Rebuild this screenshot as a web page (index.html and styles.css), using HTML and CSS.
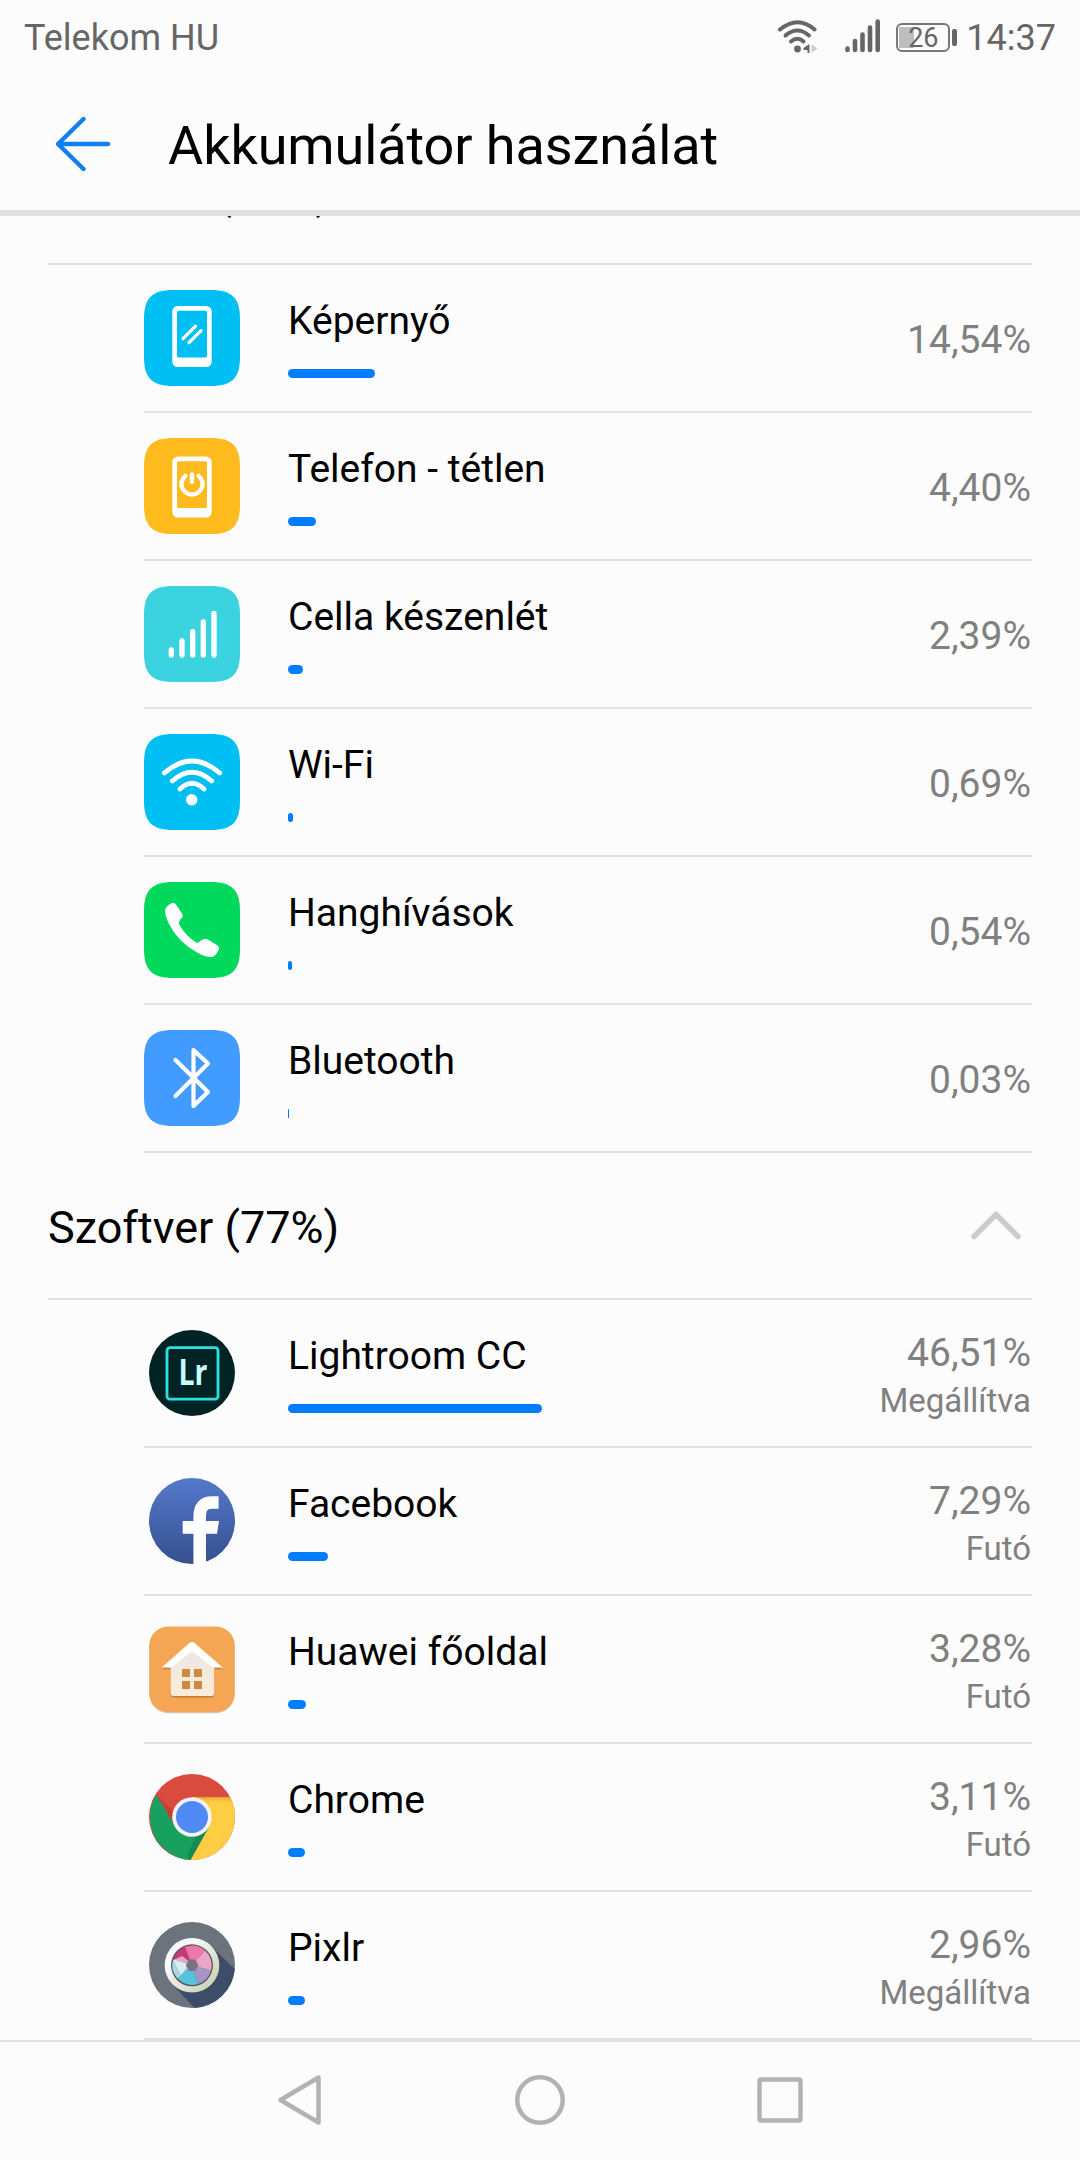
FILE: index.html
```html
<!DOCTYPE html>
<html lang="hu">
<head>
    <meta charset="UTF-8">
    <meta name="viewport" content="width=device-width, initial-scale=1.0">
    <title>Akkumulátor használat</title>
    <link rel="stylesheet" href="styles.css">
</head>
<body>
    <div class="status-bar">
        <span class="carrier">Telekom HU</span>
        <svg class="status-wifi" width="42" height="36" viewBox="0 0 42 36">
            <g fill="none" stroke="#666" stroke-width="4" stroke-linecap="round">
                <path d="M3 11.500Q21 -3 37.500 11.500"/>
                <path d="M8.500 17.500Q20.500 7.500 32 17.500"/>
                <path d="M14 23.500Q20.500 18 26.500 23.500"/>
            </g>
            <circle cx="20.500" cy="31" r="3.400" fill="#666"/>
            <path d="M32.500 26v9h-2v-3h-4v-2z" fill="#666"/>
            <path d="M34.500 26v9l6-4.500z" fill="#ccc"/>
        </svg>
        <svg class="status-signal" width="36" height="34" viewBox="0 0 36 34">
            <path d="M2.500 29.500v1.500M10 22v9M17.500 15.500v15.500M25 8.500v22.500M32.700 2.500v28.500" stroke="#666" stroke-width="4.600" stroke-linecap="round"/>
        </svg>
        <div class="battery"><span>26</span></div>
        <span class="clock">14:37</span>
    </div>

    <header class="action-bar">
        <svg class="back" width="56" height="56" viewBox="0 0 56 56">
            <path d="M28.500 3L3 28L28.500 53M3 28H53" fill="none" stroke="#0f7ff2" stroke-width="4.400" stroke-linecap="round" stroke-linejoin="round"/>
        </svg>
        <h1>Akkumulátor használat</h1>
    </header>

    <main class="scroll">
        <section class="hardware">
            <div class="section-head">
                <h2>Hardver (23%)</h2>
            </div>

            <div class="row">
                <svg class="icon" viewBox="0 0 96 96">
                    <path fill="#00c0f3" d="M29 0H67C88 0 96 8 96 29V67C96 88 88 96 67 96H29C8 96 0 88 0 67V29C0 8 8 0 29 0Z"/>
                    <rect x="28.300" y="16" width="39.400" height="61" rx="5.500" fill="#fff"/>
                    <rect x="33" y="20.700" width="30" height="46.800" rx="1.500" fill="#00c0f3"/>
                    <path d="M39 48.700L51.500 36.200M45 52.700L57 40.700" stroke="#fff" stroke-width="3.200" stroke-linecap="round"/>
                </svg>
                <div class="info">
                    <div class="name">Képernyő</div>
                    <div class="bar" style="width: 87px"></div>
                </div>
                <div class="usage"><div class="percent">14,54%</div></div>
            </div>

            <div class="row">
                <svg class="icon" viewBox="0 0 96 96">
                    <path fill="#ffbb1e" d="M29 0H67C88 0 96 8 96 29V67C96 88 88 96 67 96H29C8 96 0 88 0 67V29C0 8 8 0 29 0Z"/>
                    <rect x="28.300" y="18.500" width="39.400" height="61" rx="5.500" fill="#fff"/>
                    <rect x="33" y="23.200" width="30" height="46.800" rx="1.500" fill="#ffbb1e"/>
                    <path d="M41.500 37.800A10.500 10.500 0 1 0 54.500 37.800M48 36.300V44" fill="none" stroke="#fff" stroke-width="4.200" stroke-linecap="round"/>
                </svg>
                <div class="info">
                    <div class="name">Telefon - tétlen</div>
                    <div class="bar" style="width: 28px"></div>
                </div>
                <div class="usage"><div class="percent">4,40%</div></div>
            </div>

            <div class="row">
                <svg class="icon" viewBox="0 0 96 96">
                    <path fill="#3ad3df" d="M29 0H67C88 0 96 8 96 29V67C96 88 88 96 67 96H29C8 96 0 88 0 67V29C0 8 8 0 29 0Z"/>
                    <path d="M27.300 64V69M38 55V69M48.700 45.700V69M59.300 36V69M70 27.500V69" stroke="#fff" stroke-width="5.300" stroke-linecap="round"/>
                </svg>
                <div class="info">
                    <div class="name">Cella készenlét</div>
                    <div class="bar" style="width: 15px"></div>
                </div>
                <div class="usage"><div class="percent">2,39%</div></div>
            </div>

            <div class="row">
                <svg class="icon" viewBox="0 0 96 96">
                    <path fill="#00c0f3" d="M29 0H67C88 0 96 8 96 29V67C96 88 88 96 67 96H29C8 96 0 88 0 67V29C0 8 8 0 29 0Z"/>
                    <path d="M20.300 39Q48 15 75.700 39M28.300 47Q48 29.500 67.700 47M36 55Q48 43.500 60 55" fill="none" stroke="#fff" stroke-width="4.700" stroke-linecap="round"/>
                    <circle cx="47.700" cy="65.700" r="5.700" fill="#fff"/>
                </svg>
                <div class="info">
                    <div class="name">Wi-Fi</div>
                    <div class="bar" style="width: 5px"></div>
                </div>
                <div class="usage"><div class="percent">0,69%</div></div>
            </div>

            <div class="row">
                <svg class="icon" viewBox="0 0 96 96">
                    <path fill="#00d95b" d="M29 0H67C88 0 96 8 96 29V67C96 88 88 96 67 96H29C8 96 0 88 0 67V29C0 8 8 0 29 0Z"/>
                    <path fill="#fff" d="M28 21Q30.300 20 32 22.500L38 31.500Q39.500 34 37.800 36Q34.300 39 35 42Q41.500 54 52.500 60.700Q54.500 61 57 58.500Q60.500 56 63.500 57.300L73.500 63.500Q75.500 65 74.800 67.500Q71.500 74.500 68 75Q62 75.500 54 71Q34 60.500 24.500 41Q20.500 32 21.200 28Q22 23.500 28 21Z"/>
                </svg>
                <div class="info">
                    <div class="name">Hanghívások</div>
                    <div class="bar" style="width: 4px"></div>
                </div>
                <div class="usage"><div class="percent">0,54%</div></div>
            </div>

            <div class="row">
                <svg class="icon" viewBox="0 0 96 96">
                    <path fill="#429bff" d="M29 0H67C88 0 96 8 96 29V67C96 88 88 96 67 96H29C8 96 0 88 0 67V29C0 8 8 0 29 0Z"/>
                    <path d="M31.500 30L64 62L49.500 76V20L64 33.500L31.500 66" fill="none" stroke="#fff" stroke-width="4.200" stroke-linecap="round" stroke-linejoin="round"/>
                </svg>
                <div class="info">
                    <div class="name">Bluetooth</div>
                    <div class="bar" style="width: 1px"></div>
                </div>
                <div class="usage"><div class="percent">0,03%</div></div>
            </div>
        </section>

        <section class="software">
            <div class="section-head">
                <h2>Szoftver (77%)</h2>
                <svg class="chevron" width="50" height="30" viewBox="0 0 50 30">
                    <path d="M3 25.500L25 3.500L47 25.500" fill="none" stroke="#ccc" stroke-width="5.600" stroke-linecap="round" stroke-linejoin="round"/>
                </svg>
            </div>

            <div class="row">
                <svg class="icon" viewBox="0 0 96 96">
                    <circle cx="48" cy="48" r="43" fill="#022326"/>
                    <rect x="23" y="22.700" width="51" height="51.500" rx="3" fill="none" stroke="#2de0e0" stroke-width="2.800"/>
                    <text class="lr" x="34.500" y="60" textLength="29" lengthAdjust="spacingAndGlyphs">Lr</text>
                </svg>
                <div class="info">
                    <div class="name">Lightroom CC</div>
                    <div class="bar" style="width: 254px"></div>
                </div>
                <div class="usage">
                    <div class="percent">46,51%</div>
                    <div class="state">Megállítva</div>
                </div>
            </div>

            <div class="row">
                <svg class="icon" viewBox="0 0 96 96">
                    <defs>
                        <linearGradient id="fb" x2="0" y2="1">
                            <stop offset="0" stop-color="#5579cb"/>
                            <stop offset="1" stop-color="#36508f"/>
                        </linearGradient>
                    </defs>
                    <circle cx="48" cy="48" r="43" fill="url(#fb)"/>
                    <path d="M55.700 92V43Q55.700 29.600 68 29.600H74.600" fill="none" stroke="#fff" stroke-width="12.500"/>
                    <path d="M38.700 48H75L73 60.700H38.700Z" fill="#fff"/>
                </svg>
                <div class="info">
                    <div class="name">Facebook</div>
                    <div class="bar" style="width: 40px"></div>
                </div>
                <div class="usage">
                    <div class="percent">7,29%</div>
                    <div class="state">Futó</div>
                </div>
            </div>

            <div class="row">
                <svg class="icon" viewBox="0 0 96 96">
                    <defs>
                        <linearGradient id="wall" x2="0" y2="1">
                            <stop offset="0" stop-color="#ece6e5"/>
                            <stop offset="1" stop-color="#fdecd9"/>
                        </linearGradient>
                    </defs>
                    <rect x="5.300" y="6.800" width="85.400" height="85.400" rx="19" fill="#d9c3ac"/>
                    <rect x="5.300" y="5.500" width="85.400" height="85.400" rx="19" fill="#f5a655"/>
                    <path d="M26.700 44V73Q26.700 76.500 30 76.500H67Q70.300 76.500 70.300 73V44Z" fill="#c47d38"/>
                    <path d="M17.700 48.500L48 22.500L78.700 48.500Z" fill="#c98744"/>
                    <path d="M26.700 43L48 25L70.300 43V72Q70.300 75 67.300 75H29.700Q26.700 75 26.700 72Z" fill="url(#wall)"/>
                    <path d="M17.700 46.500L45.500 22Q48 20 50.500 22L78.700 46.500H68.500L48 30L27.500 46.500Z" fill="#fff"/>
                    <path d="M38 48h8v8h-8zM50 48h8v8h-8zM38 60h8v8h-8zM50 60h8v8h-8z" fill="#cf8a42"/>
                </svg>
                <div class="info">
                    <div class="name">Huawei főoldal</div>
                    <div class="bar" style="width: 18px"></div>
                </div>
                <div class="usage">
                    <div class="percent">3,28%</div>
                    <div class="state">Futó</div>
                </div>
            </div>

            <div class="row">
                <svg class="icon" viewBox="0 0 96 96">
                    <defs>
                        <linearGradient id="shade-y" x1="0" y1="0" x2="0" y2="1">
                            <stop offset="0" stop-color="#c98a1c" stop-opacity=".6"/>
                            <stop offset="1" stop-color="#ffcd43" stop-opacity="0"/>
                        </linearGradient>
                    </defs>
                    <circle cx="48" cy="48" r="43" fill="#da4a3f"/>
                    <path d="M12.300 25.500L31 57L65 58L46.500 91A43 43 0 0 1 12.300 25.500Z" fill="#17a05e"/>
                    <path d="M48 28H86A43 43 0 0 1 46.500 91L65 58Z" fill="#ffcd43"/>
                    <path d="M50 28H86.200L89 35H60Z" fill="url(#shade-y)"/>
                    <path d="M13 26.500L30 55L29.500 43Z" fill="#b23a30" opacity=".6"/>
                    <path d="M46.500 91L65 58L52 66L43 88Z" fill="#0d7a45" opacity=".5"/>
                    <circle cx="48" cy="48" r="19.800" fill="#f3f3f5"/>
                    <circle cx="48" cy="48" r="16" fill="#4f8af3"/>
                </svg>
                <div class="info">
                    <div class="name">Chrome</div>
                    <div class="bar" style="width: 17px"></div>
                </div>
                <div class="usage">
                    <div class="percent">3,11%</div>
                    <div class="state">Futó</div>
                </div>
            </div>

            <div class="row">
                <svg class="icon" viewBox="0 0 96 96">
                    <defs>
                        <linearGradient id="ring" x2="1" y2="1">
                            <stop offset=".3" stop-color="#f6f8fa"/>
                            <stop offset=".8" stop-color="#cfd8bd"/>
                        </linearGradient>
                    </defs>
                    <circle cx="48" cy="48" r="43" fill="#6d737c"/>
                    <path d="M67 29L90.800 52A43 43 0 0 1 50.500 91L28 67Z" fill="#3d4c68"/>
                    <circle cx="48" cy="48.300" r="27.300" fill="url(#ring)"/>
                    <circle cx="48" cy="48.300" r="21" fill="#5c5560"/>
                    <!-- aperture blades -->
                    <path d="M48 48.300L29.200 42.500A19.600 19.600 0 0 1 43 29.500Z" fill="#c43a75"/>
                    <path d="M48 48.300L41 30A19.600 19.600 0 0 1 61 33.500Z" fill="#ec77a8"/>
                    <path d="M48 48.300L61 33.500A19.600 19.600 0 0 1 67 53.500Z" fill="#e9a6c6"/>
                    <path d="M48 48.300L67 53.500A19.600 19.600 0 0 1 54 67Z" fill="#a495c6"/>
                    <path d="M48 48.300L54 67A19.600 19.600 0 0 1 33.500 61.500Z" fill="#55c3de"/>
                    <path d="M48 48.300L33.500 61.500A19.600 19.600 0 0 1 29.200 42.500Z" fill="#a5d9e2"/>
                    <path d="M29.500 43L38 39L46 45L37 58Z" fill="#fff" opacity=".55"/>
                    <path d="M45 42.500H51L54.500 48.300L51 54H45L41.800 48.300Z" fill="#77737f"/>
                </svg>
                <div class="info">
                    <div class="name">Pixlr</div>
                    <div class="bar" style="width: 17px"></div>
                </div>
                <div class="usage">
                    <div class="percent">2,96%</div>
                    <div class="state">Megállítva</div>
                </div>
            </div>
        </section>
    </main>

    <nav class="nav-bar">
        <svg width="52" height="52" viewBox="0 0 52 52">
            <path d="M44.500 3.500V48.500L6.500 26Z"/>
        </svg>
        <svg width="52" height="52" viewBox="0 0 52 52">
            <circle cx="26" cy="26" r="22.700"/>
        </svg>
        <svg width="52" height="52" viewBox="0 0 52 52">
            <rect x="5.500" y="5.500" width="41" height="41" rx="1.500"/>
        </svg>
    </nav>
</body>
</html>
```
FILE: styles.css
```css
* {
    box-sizing: border-box;
}
body {
    margin: 0;
    width: 1080px;
    height: 2160px;
    display: flex;
    flex-direction: column;
    overflow: hidden;
    background-color: #fcfcfc;
    color: #000;
    font-family: Roboto, sans-serif;
}
h1, h2 {
    margin: 0;
    font-weight: 400;
}

/* status bar */
.status-bar {
    display: flex;
    align-items: center;
    height: 75px;
    padding: 0 24px;
    font-size: 36px;
    color: #666;
}
.carrier {
    flex: 1;
}
.status-wifi {
    margin-right: 26px;
    margin-bottom: 3px;
}
.status-signal {
    margin-right: 15px;
    margin-bottom: 3px;
}
.battery {
    position: relative;
    width: 54px;
    height: 29px;
    margin-right: 16px;
    border: 2px solid #777;
    border-radius: 6px;
    background: linear-gradient(#bdbdbd, #bdbdbd) 1px 2px / 15px 21px no-repeat;
    font-size: 27px;
    line-height: 26px;
    text-align: center;
}
.battery::after {
    content: "";
    position: absolute;
    right: -9px;
    top: 4px;
    width: 5px;
    height: 17px;
    border-radius: 2px;
    background-color: #666;
}

/* title bar */
.action-bar {
    display: flex;
    align-items: center;
    height: 141px;
    padding: 3px 55px 0;
    border-bottom: 6px solid #e0e0e0;
}
.action-bar h1 {
    margin-left: 57px;
    padding-top: 3px;
    font-size: 54px;
    line-height: 64px;
    letter-spacing: -0.1px;
}

/* list, scrolled a little past the first heading */
.scroll {
    height: 1824px;
    overflow: hidden;
}
.hardware {
    margin-top: -98px;
}
.section-head {
    display: flex;
    align-items: center;
    justify-content: space-between;
    height: 147px;
    margin: 0 48px;
    padding-right: 11px;
    border-bottom: 2px solid #e0e0e0;
}
.section-head h2 {
    padding-top: 4px;
    font-size: 45px;
    line-height: 54px;
}
.row {
    display: flex;
    height: 148px;
    margin: 0 48px 0 144px;
    border-bottom: 2px solid #e0e0e0;
}
.icon {
    width: 96px;
    height: 96px;
    align-self: center;
}
.lr {
    font-family: "Open Sans", sans-serif;
    font-size: 35px;
    font-weight: 700;
    fill: #c8fbfb;
}
.info {
    flex: 1;
    margin-left: 48px;
    padding-top: 33px;
}
.name {
    font-size: 39px;
    line-height: 46px;
}
.bar {
    height: 9px;
    margin-top: 25px;
    border-radius: 5px;
    background-color: #007dff;
}
.usage {
    display: flex;
    flex-direction: column;
    justify-content: center;
    padding: 4px 1px 0 0;
    text-align: right;
    color: #808080;
}
.percent {
    font-size: 39px;
    line-height: 46px;
}
.state {
    margin-top: 5px;
    font-size: 33px;
    line-height: 40px;
}

/* navigation keys */
.nav-bar {
    display: flex;
    flex: 1;
    align-items: center;
    justify-content: center;
    gap: 188px;
    padding-bottom: 2px;
    border-top: 2px solid #e0e0e0;
}
.nav-bar svg {
    fill: none;
    stroke: #b2b2b2;
    stroke-width: 4.5;
    stroke-linejoin: round;
}
```
